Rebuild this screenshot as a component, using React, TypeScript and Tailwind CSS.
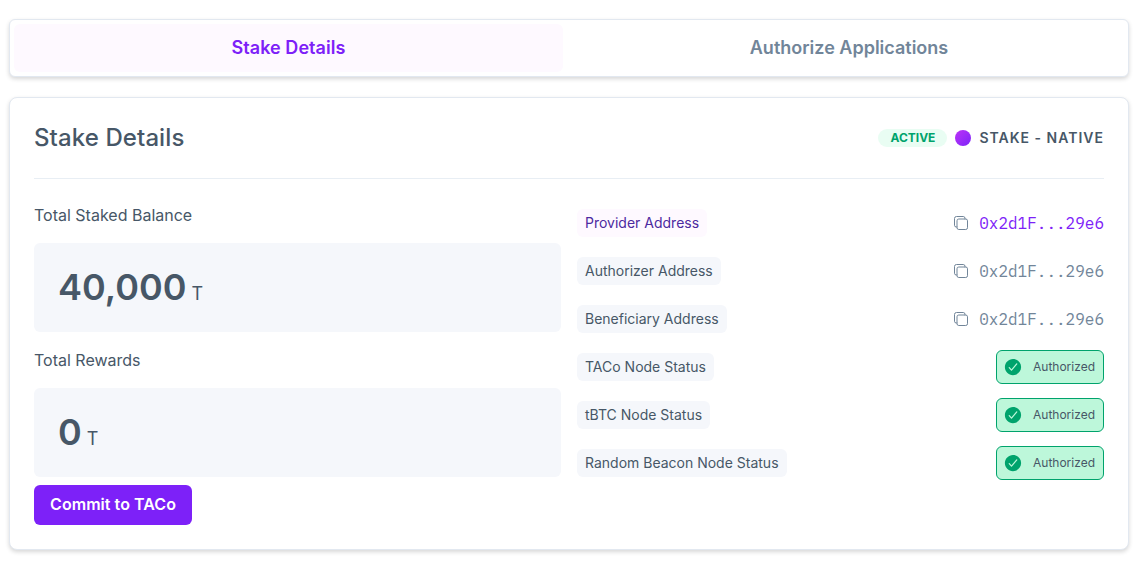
import React from "react";
import { IoCopyOutline, IoCheckmarkCircle } from "react-icons/io5";

const addresses = [
  { label: "Provider Address", value: "0x2d1F...29e6", primary: true },
  { label: "Authorizer Address", value: "0x2d1F...29e6", primary: false },
  { label: "Beneficiary Address", value: "0x2d1F...29e6", primary: false },
];

const nodes = ["TACo Node Status", "tBTC Node Status", "Random Beacon Node Status"];

function Label({ children, primary = false }: { children: React.ReactNode; primary?: boolean }) {
  return (
    <span
      className={`h-7 rounded-md px-2 text-[14px] leading-7 ${
        primary ? "bg-[#fef9ff] text-[#4c2aa0]" : "bg-[#f5f7fb] text-[#475767]"
      }`}
    >
      {children}
    </span>
  );
}

function Balance({ title, amount }: { title: string; amount: string }) {
  return (
    <section>
      <h3 className="text-[16px] leading-6">{title}</h3>
      <div className="mt-4 flex h-[89px] items-baseline rounded-md bg-[#f5f7fb] px-6 pt-[20px]">
        <span className="text-[36px] font-semibold leading-[48px]">{amount}</span>
        <span className="ml-[5px] text-[18px] leading-6">T</span>
      </div>
    </section>
  );
}

export default function App() {
  return (
    <main className="h-[565px] w-[1145px] overflow-hidden bg-white pt-[19px] pl-[9px] font-['Inter',sans-serif] text-[#475767]">
      <nav className="flex h-[58px] w-[1120px] rounded-md border border-[#e2e8f0] bg-white p-1 shadow-[0_2px_4px_rgba(0,0,0,0.16)]">
        <button className="h-12 w-[549px] rounded-md bg-[#fef9ff] pb-0.5 text-[18px] font-semibold tracking-[0.05px] text-[#7d21f8]">
          Stake Details
        </button>
        <button className="ml-[11px] h-12 flex-1 rounded-md pb-0.5 text-[18px] font-semibold text-[#718599]">
          Authorize Applications
        </button>
      </nav>

      <div className="mt-5 h-[453px] w-[1120px] rounded-lg border border-[#e2e8f0] bg-white px-6 pt-6 shadow-[0_2px_4px_rgba(0,0,0,0.16)]">
        <header className="flex h-[57px] justify-between border-b border-[#e8eef4]">
          <h2 className="text-[24px] font-[450] leading-8 tracking-[0.1px]">Stake Details</h2>
          <div className="flex h-8 items-center">
            <span className="flex h-[18px] w-[69px] items-center justify-center rounded-full bg-[#e9fdf3] text-[12px] font-bold text-[#00a36c]">
              ACTIVE
            </span>
            <span className="ml-2 size-4 rounded-full bg-gradient-to-br from-[#bd30f7] to-[#7d21f8]" />
            <span className="ml-2 pb-px text-[14px] font-semibold tracking-[1px]">STAKE - NATIVE</span>
          </div>
        </header>

        <div className="mt-6 flex gap-4">
          <div className="w-[527px]">
            <Balance title="Total Staked Balance" amount="40,000" />
            <div className="mt-4">
              <Balance title="Total Rewards" amount="0" />
            </div>
            <button className="mt-2 h-10 w-[158px] rounded-md bg-[#7d21f8] pb-0.5 text-[16px] font-semibold tracking-[0.05px] text-white">
              Commit to TACo
            </button>
          </div>

          <ul className="mt-[6px] flex-1">
            {addresses.map((a) => (
              <li key={a.label} className="mb-5 flex h-7 items-center justify-between">
                <Label primary={a.primary}>{a.label}</Label>
                <span className="flex items-center gap-2.5">
                  <IoCopyOutline className="size-4 text-[#718599]" />
                  <span
                    className={`font-['IBM_Plex_Mono','Liberation_Mono',monospace] text-[16px] leading-6 ${
                      a.primary ? "text-[#7d21f8]" : "text-[#718599]"
                    }`}
                  >
                    {a.value}
                  </span>
                </span>
              </li>
            ))}
            {nodes.map((n) => (
              <li key={n} className="mb-5 flex h-7 items-center justify-between">
                <Label>{n}</Label>
                <span className="flex h-[34px] w-[108px] items-center rounded-md border border-[#00a36c] bg-[#bdf7da] pl-2 text-[12px]">
                  <IoCheckmarkCircle className="-ml-0.5 size-5 text-[#00a36c]" />
                  <span className="ml-2.5">Authorized</span>
                </span>
              </li>
            ))}
          </ul>
        </div>
      </div>
    </main>
  );
}
